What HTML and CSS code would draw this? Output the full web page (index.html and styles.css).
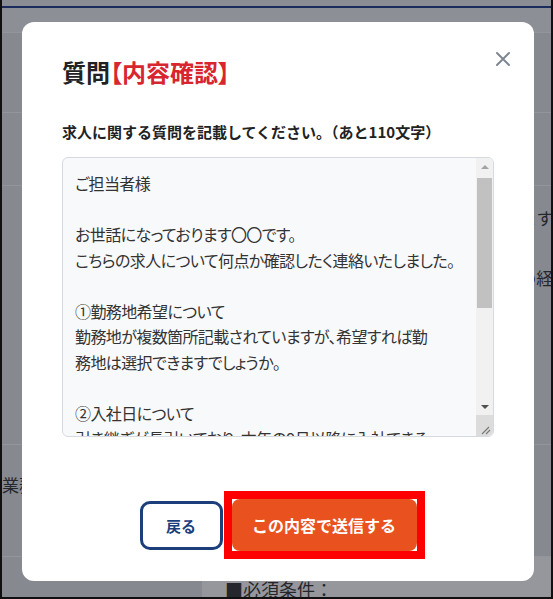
FILE: index.html
```html
<!DOCTYPE html>
<html lang="ja">
<head>
    <meta charset="UTF-8">
    <meta name="viewport" content="width=device-width, initial-scale=1.0">
    <title>質問【内容確認】</title>
    <link rel="stylesheet" href="styles.css">
</head>
<body>

    <div class="page">
        <div class="topbar"></div>
        <div class="row r1"><div class="cell"></div><div class="cell"></div></div>
        <div class="row r2"><div class="cell"></div><div class="cell"></div></div>
        <div class="row r3"><div class="cell"></div><div class="cell"></div></div>
        <div class="row r4">
            <div class="cell"></div>
            <div class="cell body-text">
                <p>経験やスキルを活かしてご活躍いただけます。</p>
                <p>必須ではありませんが、接客や販売業務の経験があれば歓迎します。</p>
            </div>
        </div>
        <div class="row r5">
            <div class="cell label-text">業務内容</div>
            <div class="cell"></div>
        </div>
        <div class="row r6">
            <div class="cell"></div>
            <div class="cell light body-text"><p>■必須条件：</p></div>
        </div>
    </div>

    <div class="modal">
        <button class="close" aria-label="閉じる">
            <svg width="16" height="16" viewBox="0 0 16 16"><path d="M2 2L14 14M14 2L2 14" stroke="#7f8793" stroke-width="2" stroke-linecap="round" fill="none"/></svg>
        </button>
        <h2 class="title">質問<span class="title-red">【内容確認】</span></h2>
        <p class="label">求人に関する質問を記載してください。（あと110文字）</p>
        <div class="field">
            <textarea class="question" id="question">ご担当者様

お世話になっております〇〇です。
こちらの求人について何点か確認したく連絡いたしました。

①勤務地希望について
勤務地が複数箇所記載されていますが、希望すれば勤
務地は選択できますでしょうか。

②入社日について
引き継ぎが長引いており、本年の9月以降に入社できる
と助かるのですが、可能でしょうか。

お忙しいところ恐縮ですが、ご確認のほど
よろしくお願いいたします。

山田</textarea>
            <div class="scrollbar">
                <div class="sb-btn"><span class="arrow-up"></span></div>
                <div class="sb-track"><div class="sb-thumb"></div></div>
                <div class="sb-btn"><span class="arrow-down"></span></div>
                <div class="sb-corner">
                    <svg width="17" height="21" viewBox="0 0 17 21"><path d="M6 19L13 12M10 19L14 15" stroke="#7a7a7a" stroke-width="1.2" fill="none"/></svg>
                </div>
            </div>
        </div>
        <div class="actions">
            <button class="btn-back">戻る</button>
            <span class="highlight"><button class="btn-send">この内容で送信する</button></span>
        </div>
    </div>

</body>
</html>
```

FILE: styles.css
```css
html, body { margin: 0; padding: 0; }
body { width: 553px; height: 599px; overflow: hidden; position: relative; font-family: "Noto Sans CJK JP", "Noto Sans", sans-serif; background: #878990; }

/* dimmed page behind the modal */
.page { height: 599px; box-sizing: border-box; border: 2px solid #101010; border-top: 0; overflow: hidden; color: #26272c; }
.topbar { height: 6px; background: #8b8d94; border-bottom: 2px solid #1b2b5c; }
.row { display: grid; grid-template-columns: 200px 1fr; border-bottom: 1px solid #93959c; }
.cell { min-width: 0; white-space: nowrap; }
.r1 { height: 24px; background: #8d8f96; }
.r2 { height: 79px; }
.r3 { height: 72px; }
.r4 { height: 258px; }
.r5 { height: 111px; }
.r6 { height: 60px; border-bottom: 0; }
.body-text { font-size: 17px; line-height: 22px; padding-left: 12px; }
.body-text p { margin: 0; }
.r4 .body-text { padding-top: 21px; }
.r4 .body-text p + p { margin-top: 38px; }
.label-text { font-size: 17px; line-height: 22px; padding-top: 29px; }
.light { background: #95979d; padding-top: 21px; padding-left: 23px; font-size: 18px; }

/* modal */
.modal { position: absolute; left: 22px; top: 22px; width: 512px; box-sizing: border-box; padding: 34px 40px 30px; background: #fff; border-radius: 12px; }
.close { position: absolute; left: 473px; top: 29px; width: 16px; height: 16px; padding: 0; border: none; background: none; cursor: pointer; line-height: 0; }
.title { margin: 0; font-size: 24px; line-height: 31px; font-weight: 700; color: #222; font-feature-settings: "palt"; }
.title-red { color: #d8262e; }
.label { margin: 34px 0 14px; font-size: 15px; line-height: 22px; font-weight: 700; color: #222; }

/* textarea with its scrollbar drawn beside it */
.field { display: flex; height: 280px; box-sizing: border-box; border: 1px solid #d6dae0; border-radius: 6px; background: #f8f9fb; overflow: hidden; }
.question { flex: 1; min-width: 0; margin: 0; padding: 13px 12px; border: none; outline: none; background: transparent; color: #333; font-family: "Noto Sans CJK JP", sans-serif; font-size: 16px; line-height: 25.5px; letter-spacing: -0.6px; font-feature-settings: "palt"; resize: none; overflow: hidden; }
.scrollbar { width: 17px; display: flex; flex-direction: column; background: #f1f1f1; }
.sb-btn { height: 17px; display: flex; align-items: center; justify-content: center; }
.sb-track { flex: 1; padding: 3px 1px 0; }
.sb-thumb { height: 130px; background: #c1c1c1; }
.sb-corner { height: 21px; background: #dcdcdc; line-height: 0; }
.arrow-up { width: 0; height: 0; border-left: 4px solid transparent; border-right: 4px solid transparent; border-bottom: 4px solid #a3a3a3; }
.arrow-down { width: 0; height: 0; border-left: 4px solid transparent; border-right: 4px solid transparent; border-top: 4px solid #505050; }

.actions { display: flex; justify-content: center; align-items: center; gap: 9px; margin-top: 62px; }
.btn-back { width: 83px; height: 49px; border: 3px solid #1c3f7c; border-radius: 10px; background: #fff; color: #1c3f7c; font-family: inherit; font-size: 15px; font-weight: 700; cursor: pointer; }
.highlight { position: relative; display: block; }
.highlight::after { content: ""; position: absolute; inset: -8px; border: 8px solid #ff0000; pointer-events: none; }
.btn-send { display: block; width: 185px; height: 52px; border: none; border-radius: 8px; background: #e9521f; color: #fff; font-family: inherit; font-size: 16px; font-weight: 700; cursor: pointer; }
```
